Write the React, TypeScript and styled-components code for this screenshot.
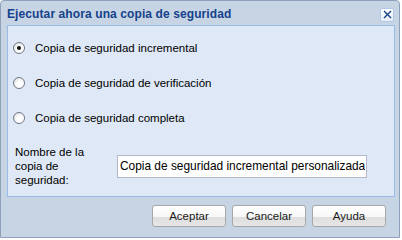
import styled, { createGlobalStyle } from 'styled-components';

const GlobalStyle = createGlobalStyle`
  body {
    margin: 0;
    background: #ffffff;
    font-family: "Liberation Sans", Arial, sans-serif;
  }
`;

const options = [
  'Copia de seguridad incremental',
  'Copia de seguridad de verificación',
  'Copia de seguridad completa',
];

const buttons = ['Aceptar', 'Cancelar', 'Ayuda'];

const App = () => {
  const selected = 0;

  return (
    <>
      <GlobalStyle />
      <Window>
        <TitleBar>
          <Title>Ejecutar ahora una copia de seguridad</Title>
          <CloseButton aria-label="Cerrar">
            <svg width="9" height="9" viewBox="0 0 9 9">
              <path d="M1 1 L8 8 M8 1 L1 8" stroke="#15428b" strokeWidth="1.4" fill="none" />
            </svg>
          </CloseButton>
        </TitleBar>
        <Panel>
          <RadioList>
            {options.map((text, idx) => (
              <RadioRow key={`opt-${idx}`}>
                <Radio $checked={idx === selected} />
                <RadioLabel>{text}</RadioLabel>
              </RadioRow>
            ))}
          </RadioList>
          <FormRow>
            <FieldLabel>Nombre de la copia de seguridad:</FieldLabel>
            <TextField defaultValue="Copia de seguridad incremental personalizada" />
          </FormRow>
        </Panel>
        <ButtonBar>
          {buttons.map((label) => (
            <Button key={label}>{label}</Button>
          ))}
        </ButtonBar>
      </Window>
    </>
  );
};

export default App;

const Window = styled.div`
  box-sizing: border-box;
  width: 400px;
  height: 238px;
  border: 1px solid #8fa1ba;
  border-radius: 4px 4px 0 0;
  background: #c7d4e4;
  padding: 0 4px 0 6px;
  display: flex;
  flex-direction: column;
`;

const TitleBar = styled.div`
  height: 24px;
  display: flex;
  align-items: center;
  justify-content: space-between;
`;

const Title = styled.div`
  font-size: 12px;
  font-weight: bold;
  color: #15428b;
  letter-spacing: 0.1px;
  padding-top: 1px;
`;

const CloseButton = styled.div`
  box-sizing: border-box;
  width: 14px;
  height: 14px;
  margin-right: 1px;
  margin-top: 3px;
  border: 1px solid #b3c8e6;
  border-radius: 2px;
  background: linear-gradient(#ffffff, #e6eef9);
  display: flex;
  align-items: center;
  justify-content: center;
`;

const Panel = styled.div`
  box-sizing: border-box;
  height: 172px;
  border: 1px solid #99bbe8;
  background: #dfe8f6;
  padding: 12px 5px 0;
  display: flex;
  flex-direction: column;
`;

const RadioList = styled.div`
  display: flex;
  flex-direction: column;
  gap: 15px;
`;

const RadioRow = styled.label`
  height: 20px;
  display: flex;
  align-items: center;
  gap: 10px;
  font-size: 11.5px;
  color: #000;
`;

const Radio = styled.span<{ $checked: boolean }>`
  box-sizing: border-box;
  width: 12px;
  height: 12px;
  border-radius: 50%;
  border: 1px solid #6f7886;
  background: radial-gradient(circle at 65% 65%, #ffffff 35%, #d6d6d6 100%);
  position: relative;
  &::after {
    content: '';
    display: ${(p) => (p.$checked ? 'block' : 'none')};
    position: absolute;
    left: 3px;
    top: 3px;
    width: 4px;
    height: 4px;
    border-radius: 50%;
    background: #111;
  }
`;

const RadioLabel = styled.span`
  white-space: nowrap;
`;

const FormRow = styled.div`
  margin-top: 17px;
  padding-left: 2px;
  display: flex;
  align-items: center;
  gap: 10px;
`;

const FieldLabel = styled.div`
  width: 92px;
  font-size: 11.5px;
  line-height: 14px;
  color: #000;
`;

const TextField = styled.input`
  box-sizing: border-box;
  width: 250px;
  height: 23px;
  border: 1px solid #b5b8c8;
  background: #ffffff;
  padding: 0 1px 0 2px;
  font-family: "Liberation Sans", Arial, sans-serif;
  font-size: 11.9px;
  color: #000;
  outline: none;
`;

const ButtonBar = styled.div`
  display: flex;
  justify-content: flex-end;
  gap: 6px;
  margin-top: 8px;
  padding-right: 9px;
`;

const Button = styled.button`
  box-sizing: border-box;
  width: 74px;
  height: 22px;
  border: 1px solid #a7a7a7;
  border-radius: 3px;
  background: linear-gradient(#ffffff 0%, #f7f7f7 55%, #dedede 56%, #e6e6e6 100%);
  font-family: "Liberation Sans", Arial, sans-serif;
  font-size: 11.5px;
  color: #1a1a1a;
  padding: 0;
`;
